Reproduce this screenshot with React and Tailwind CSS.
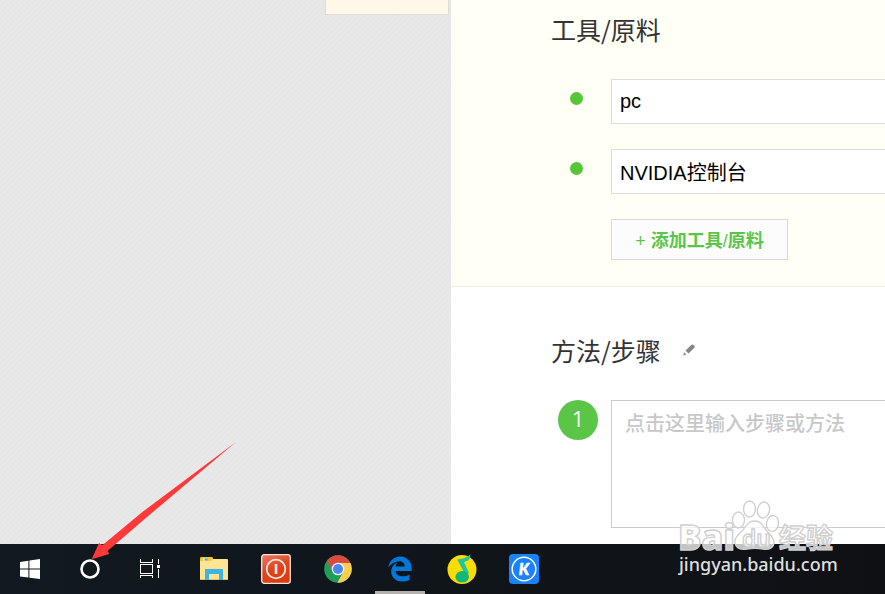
import React from 'react';
import { FaEdgeLegacy } from 'react-icons/fa6';

const tools = ['pc', 'NVIDIA控制台'];

const WindowsIcon = () => (
  <svg viewBox="0 0 20 20" className="h-5 w-5" fill="#fff">
    <path d="M0 3l8.4-1.2v7.8H0zM9.4 1.6L20 0v9.6H9.4zM0 10.6h8.4v8L0 17.4zM9.4 10.6H20V20L9.4 18.7z" />
  </svg>
);

const CortanaIcon = () => (
  <svg viewBox="0 0 20 20" className="h-5 w-5" fill="none" stroke="#fff">
    <circle cx="10" cy="10" r="8.5" strokeWidth="2.6" />
  </svg>
);

const TaskViewIcon = () => (
  <svg viewBox="0 0 20 20" className="h-5 w-5" fill="none" stroke="#fff">
    <path d="M.5 0v3.5h12V0M.5 5.5h12v9H.5zM.5 19v-2.5h12V19M18.5 0v5M18.5 10v9" shapeRendering="crispEdges" />
    <path d="M17 6h3v3h-3z" fill="#fff" stroke="none" />
  </svg>
);

const FolderIcon = () => (
  <svg viewBox="0 0 28 24" className="h-6 w-7">
    <path d="M0 1.5Q0 0 1 0h11q1 0 1 1.5V5H0z" fill="#fbc52c" />
    <path d="M3 1.5h4v2H3z" fill="#fff" />
    <path d="M4.5 1.5h3v2h-3z" fill="#38aee0" />
    <path d="M0 4h11l2-2h14q1 0 1 1v20H0z" fill="#ffe593" />
    <path d="M0 22h28v1H0z" fill="#e7bf58" />
    <path d="M5 12h18v11h-4v-6H9v6H5z" fill="#3cb4e6" />
  </svg>
);

const PowerIcon = () => (
  <svg viewBox="0 0 30 30" className="h-[30px] w-[30px]">
    <defs>
      <linearGradient id="power" x1="0" y1="0" x2="0.4" y2="1">
        <stop offset="0" stopColor="#f07a63" />
        <stop offset="0.55" stopColor="#dc4620" />
        <stop offset="1" stopColor="#dd3c0c" />
      </linearGradient>
    </defs>
    <rect x="0.7" y="0.7" width="28.6" height="28.6" rx="2.5" fill="url(#power)" stroke="#f8e4df" strokeWidth="1.3" />
    <circle cx="15" cy="15" r="9.3" fill="none" stroke="#fbeae4" strokeWidth="1.8" />
    <path d="M15 10v10" stroke="#fbeae4" strokeWidth="2.6" />
  </svg>
);

const ChromeIcon = () => (
  <svg viewBox="0 0 28 28" className="h-7 w-7">
    <circle cx="14" cy="14" r="13.8" fill="#1f9d5b" />
    <path d="M14 8h12.4A13.8 13.8 0 0 1 13.4 27.8L19.2 17z" fill="#fdce49" />
    <path d="M26.4 8A13.8 13.8 0 0 0 3 5.8L8.8 17 14 8z" fill="#db4a3e" />
    <circle cx="14" cy="14" r="6.3" fill="#f4f4f4" />
    <circle cx="14" cy="14" r="5" fill="#4688f4" />
  </svg>
);

const MusicIcon = () => (
  <svg viewBox="0 0 30 30" className="h-[30px] w-[30px]">
    <circle cx="15" cy="15.4" r="14.5" fill="#ffdc00" />
    <path d="M23.2.2c.4 3.8-1 6.8-6.2 7.8l5 11-3.500 2L10.200 5.500C16 4.500 20 4 23.200.2z" fill="#1cc8a0" />
    <ellipse cx="15.200" cy="22.800" rx="6.800" ry="5.800" fill="#10b878" />
  </svg>
);

const KugouIcon = () => (
  <svg viewBox="0 0 30 30" className="h-[30px] w-[30px]">
    <rect width="30" height="30" rx="4" fill="#1b82ff" />
    <circle cx="15" cy="15" r="11.8" fill="none" stroke="#fff" strokeWidth="1.5" />
    <text x="15" y="20.5" textAnchor="middle" fill="#fff" stroke="#fff" strokeWidth="0.5" className="font-['Lato'] text-[16px] font-black italic">K</text>
  </svg>
);

const pinned = [
  { name: 'File Explorer', icon: <FolderIcon /> },
  { name: 'Power', icon: <PowerIcon /> },
  { name: 'Chrome', icon: <ChromeIcon /> },
  { name: 'Edge', icon: <FaEdgeLegacy className="h-[26px] w-[26px] text-[#0078d7]" />, active: true },
  { name: 'QQ Music', icon: <MusicIcon /> },
  { name: 'Kugou', icon: <KugouIcon /> },
];

const Taskbar = () => (
  <footer className="flex h-[50px] shrink-0 bg-linear-to-r from-[#101a20] to-[#0f1014]">
    {[
      { name: 'Start', icon: <WindowsIcon /> },
      { name: 'Cortana', icon: <CortanaIcon /> },
      { name: 'Task View', icon: <TaskViewIcon /> },
    ].map((item) => (
      <button key={item.name} aria-label={item.name} className="flex w-[60px] items-center justify-center">
        {item.icon}
      </button>
    ))}
    <div className="ml-[3px] flex">
      {pinned.map((item) => (
        <button
          key={item.name}
          aria-label={item.name}
          className="relative flex w-[62px] items-center justify-center"
        >
          {item.icon}
          {item.active && <span className="absolute inset-x-[6px] bottom-0 h-[3px] bg-[#b5b1ae]" />}
        </button>
      ))}
    </div>
  </footer>
);

const Arrow = () => (
  <svg viewBox="0 0 146 118" className="pointer-events-none absolute bottom-[34px] left-[91px] h-[118px] w-[146px]" fill="#fd3a39">
    <path d="M.7 117.3L8 101l3.300 2.300L52 69.500 145 0 56 75 16.500 109l1.800 3z" />
  </svg>
);

const Watermark = () => (
  <div className="pointer-events-none absolute bottom-[18px] right-[47px] w-40">
    <svg viewBox="0 0 160 54" className="h-[54px] w-40 overflow-visible" fill="#fff" fillOpacity="0.75" stroke="#d0d0d0" strokeWidth="1.4">
      <text x="0" y="52" className="font-['Open_Sans'] text-[35px] font-extrabold">Bai</text>
      <ellipse cx="60.5" cy="22" rx="6" ry="8" />
      <ellipse cx="71.5" cy="11" rx="6" ry="8" />
      <ellipse cx="85.5" cy="12" rx="6" ry="8" transform="rotate(12 85.5 12)" />
      <ellipse cx="94.5" cy="25.5" rx="6" ry="8" transform="rotate(8 94.5 25.5)" />
      <path d="M77 23c-7 0-9 5-12 9-5 5-9 8-8 13 1 6 7 7 12 6 6-1 10-1 16 0 6 1 11-1 11-7 0-5-5-8-8-12-3-4-5-9-11-9z" />
      <text x="64" y="49" className="font-['Open_Sans'] text-[23px] font-semibold">du</text>
      <text x="101" y="50" className="font-['Noto_Sans_CJK_SC'] text-[27px] font-bold">经验</text>
    </svg>
    <p className="ml-px font-['Noto_Sans'] text-[18px] font-medium leading-6 text-[#dedede]">jingyan.baidu.com</p>
  </div>
);

const App = () => {
  return (
    <div className="relative flex min-h-screen flex-col overflow-hidden bg-white font-['Noto_Sans_CJK_SC',sans-serif]">
      <main className="flex flex-1">
        <aside className="w-[451px] shrink-0 bg-[#e7e7e7] bg-[repeating-linear-gradient(135deg,#e6e6e6_0_2px,#e8e8e8_2px_4px)]">
          <div className="ml-auto mr-[2px] h-[15px] w-[124px] border border-t-0 border-[#e0dccf] bg-[#fff8e9]" />
        </aside>

        <div className="min-w-0 flex-1">
          <section className="border-b border-[#eeeee2] bg-[#fffff5] pb-[26px] pl-[100px] pt-[9px]">
            <h2 className="text-[25px] leading-10 text-[#333]">工具/原料</h2>
            <ul className="mt-[30px] flex flex-col gap-[25px]">
              {tools.map((tool) => (
                <li key={tool} className="flex">
                  <span className="ml-[19px] mr-7 mt-[13px] h-[13px] w-[13px] shrink-0 rounded-full bg-[#54c637]" />
                  <input
                    aria-label={tool}
                    defaultValue={tool}
                    className="h-[45px] min-w-0 flex-1 border border-r-0 border-[#ddd] bg-white px-2 font-['Liberation_Sans','Noto_Sans_CJK_SC',sans-serif] text-[20px] text-black outline-none"
                  />
                </li>
              ))}
            </ul>
            <button className="ml-[60px] mt-[25px] h-[41px] w-[177px] border border-[#d9d9d9] bg-[#fcfcfc] pt-1 font-['Liberation_Sans','Noto_Sans_CJK_SC',sans-serif] text-[18px] font-bold text-[#5ac547]">
              <span className="font-normal">+</span> 添加工具<span className="font-normal">/</span>原料
            </button>
          </section>

          <section className="pl-[100px] pt-[43px]">
            <div className="flex items-center gap-[22px]">
              <h2 className="text-[25px] leading-10 text-[#333]">方法/步骤</h2>
              <button aria-label="编辑">
                <svg viewBox="0 0 12 12" className="h-3 w-3" fill="#858585">
                  <path d="M2.500 6.500L8.500.8q.8-.7 1.600 0L11.500 2q.5.800 0 1.600L5.500 9.500zM1 8.200L3.200 10.500.3 11.700z" />
                </svg>
              </button>
            </div>
            <div className="mt-[30px] flex">
              <span className="ml-[7px] mr-[13px] flex h-10 w-10 shrink-0 items-center justify-center rounded-full bg-[#5ac547] font-['Open_Sans'] text-[21px] text-white">
                1
              </span>
              <textarea
                aria-label="步骤"
                placeholder="点击这里输入步骤或方法"
                className="h-32 min-w-0 flex-1 resize-none border border-r-0 border-[#ccc] bg-white px-[13px] py-[7px] text-[20px] leading-[30px] outline-none placeholder:font-medium placeholder:text-[#c8c8c8]"
              />
            </div>
          </section>
        </div>
      </main>

      <Taskbar />
      <Arrow />
      <Watermark />
    </div>
  );
};

export default App;
